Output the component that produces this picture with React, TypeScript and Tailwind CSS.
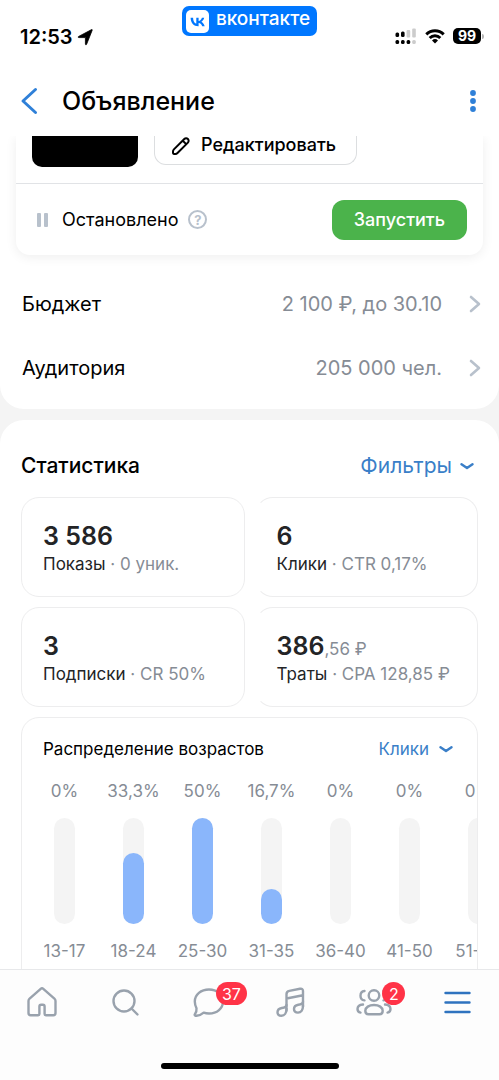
import type { ReactNode } from 'react'

interface Stat {
  value: string
  fraction?: string
  label: string
  note: string
}

interface AgeGroup {
  range: string
  share: string
  fill: number
}

const STATS: Stat[] = [
  { value: '3 586', label: 'Показы', note: '0 уник.' },
  { value: '6', label: 'Клики', note: 'CTR 0,17%' },
  { value: '3', label: 'Подписки', note: 'CR 50%' },
  { value: '386', fraction: ',56 ₽', label: 'Траты', note: 'CPA 128,85 ₽' },
]

const SETTINGS = [
  { name: 'Бюджет', value: '2 100 ₽, до 30.10' },
  { name: 'Аудитория', value: '205 000 чел.' },
]

// fill is relative to the largest group
const AGES: AgeGroup[] = [
  { range: '13-17', share: '0%', fill: 0 },
  { range: '18-24', share: '33,3%', fill: 67 },
  { range: '25-30', share: '50%', fill: 100 },
  { range: '31-35', share: '16,7%', fill: 33 },
  { range: '36-40', share: '0%', fill: 0 },
  { range: '41-50', share: '0%', fill: 0 },
  { range: '51-60', share: '0%', fill: 0 },
]

function ChevronDown() {
  return (
    <svg width="14" height="8" viewBox="0 0 14 8" fill="none" stroke="currentColor" strokeWidth="2.4" strokeLinecap="round" strokeLinejoin="round">
      <path d="M1.5 2.300 7 6.100l5.500-3.800" />
    </svg>
  )
}

function StatusBar() {
  return (
    <div className="grid grid-cols-3 items-start pt-1.5">
      <div className="flex items-center gap-1 pt-[17px] pl-5">
        <span className="text-[20px] leading-7 font-semibold">12:53</span>
        <svg width="17" height="17" viewBox="0 0 17 17">
          <path d="M15.200 1.200 9.600 15.300c-.3.8-1.200.7-1.200-.2V8.900c0-.2-.1-.3-.3-.3H1.900c-.9 0-1-.9-.2-1.200L14.600.6c.5-.2.8.1.6.6Z" fill="#000" stroke="#000" strokeWidth="0.8" strokeLinejoin="round" />
        </svg>
      </div>

      <div className="flex justify-center">
        <div className="flex h-[30px] items-center gap-[7px] rounded-[7px] bg-[#0077ff] pr-[7px] pl-1 text-white">
          <svg width="23" height="23" viewBox="0 0 23 23">
            <rect width="23" height="23" rx="5" fill="#fff" />
            <path d="M12.300 16.200C7.600 16.200 4.800 13 4.600 7.700h2.500c.1 3.900 1.800 5.500 3.200 5.900V7.700h2.300V11c1.400-.1 2.800-1.600 3.300-3.300h2.300c-.4 2-1.900 3.500-2.900 4.100 1 .5 2.700 1.800 3.400 4.400h-2.500c-.5-1.600-1.800-2.900-3.600-3.100v3.100Z" fill="#07f" />
          </svg>
          <span className="pb-1 text-[19px] leading-6 font-medium">вконтакте</span>
        </div>
      </div>

      <div className="flex items-center justify-end gap-2 pt-[22px] pr-[15px]">
        <svg width="22" height="16" viewBox="0 0 22 16">
          <rect x="0.500" y="4.500" width="3.600" height="4.500" rx="1.500" />
          <rect x="6" y="3.500" width="3.600" height="5.500" rx="1.500" />
          <rect x="11.600" y="2" width="3.600" height="7.500" rx="1" fill="#ccc" />
          <rect x="17.200" y="0.500" width="3.600" height="9" rx="1" fill="#ccc" />
          <rect x="0.500" y="12" width="3.600" height="4" rx="1.500" />
          <rect x="6" y="12" width="3.600" height="4" rx="1.500" />
          <rect x="11.600" y="12" width="3.600" height="4" rx="1.500" />
          <rect x="17.200" y="12" width="3.600" height="4" rx="1.500" fill="#ccc" />
        </svg>
        <svg width="20" height="15" viewBox="0 0 20 15" fill="none" stroke="#000" strokeWidth="3">
          <path d="M1.300 5.400a12.400 12.400 0 0 1 17.400 0" />
          <path d="M4.700 9a7.600 7.600 0 0 1 10.600 0" />
          <path d="m10 14.500-3-3a4.300 4.300 0 0 1 6 0Z" fill="#000" stroke="none" />
        </svg>
        <div className="flex items-center gap-px">
          <span className="flex h-4 w-7 items-center justify-center rounded-[5px] bg-black text-[14px] leading-4 font-bold text-white">99</span>
          <span className="h-[5px] w-[2px] rounded-r-full bg-[#b5b5b5]" />
        </div>
      </div>
    </div>
  )
}

function StatCard({ stat, right }: { stat: Stat; right: boolean }) {
  return (
    <div className={`h-[100px] rounded-[18px] border border-[#ededee] px-[21px] pt-6 ${right ? 'border-l-transparent' : ''}`}>
      <div className="h-7 text-[25px] leading-7 font-semibold text-[#232426]">
        {stat.value}
        {stat.fraction && <span className="text-[17px] font-normal text-[#868c95]">{stat.fraction}</span>}
      </div>
      <div className="mt-0.5 text-[17px] leading-6 whitespace-nowrap text-[#868c95]">
        <span className="text-[#232426]">{stat.label}</span> · {stat.note}
      </div>
    </div>
  )
}

function TabLink({ label, badge, active, children }: { label: string; badge?: string; active?: boolean; children: ReactNode }) {
  return (
    <a href="#" aria-label={label} className={`flex flex-1 justify-center ${active ? 'text-[#2f73bf]' : 'text-[#99a2ad]'}`}>
      <span className="relative">
        <svg width="36" height="36" viewBox="0 0 36 36" fill="none" stroke="currentColor" strokeWidth="2.400" strokeLinecap="round" strokeLinejoin="round">
          {children}
        </svg>
        {badge && (
          <span className="absolute -top-0.5 left-[26px] flex h-[23px] min-w-[23px] items-center justify-center rounded-full bg-[#ff3347] px-[6px] text-[16px] leading-5 text-white">
            {badge}
          </span>
        )}
      </span>
    </a>
  )
}

export default function App() {
  return (
    <div className="flex h-screen flex-col bg-[#f4f4f4] font-[Inter,'Liberation_Sans',sans-serif] text-black">
      {/* Header */}
      <header className="shrink-0 bg-white">
        <StatusBar />
        <div className="flex items-center pt-8 pr-[22px] pb-[17px] pl-5">
          <button type="button" aria-label="Назад" className="text-[#2f80d8]">
            <svg width="18" height="28" viewBox="0 0 18 28" fill="none" stroke="currentColor" strokeWidth="3" strokeLinecap="round" strokeLinejoin="round">
              <path d="M15.500 2.500 3 14l12.500 11.500" />
            </svg>
          </button>
          <h1 className="ml-6 flex-1 text-[25px] leading-9 font-medium">Объявление</h1>
          <button type="button" aria-label="Ещё" className="text-[#2f80d8]">
            <svg width="8" height="24" viewBox="0 0 8 24" fill="currentColor">
              <circle cx="4" cy="4" r="2.900" />
              <circle cx="4" cy="12" r="2.900" />
              <circle cx="4" cy="20" r="2.900" />
            </svg>
          </button>
        </div>
      </header>

      <main className="flex min-h-0 flex-1 flex-col gap-[11px] overflow-hidden">
        {/* Ad card and settings */}
        <section className="shrink-0 rounded-b-[24px] bg-white pb-[9px]">
          <div className="mx-4 rounded-b-[14px] shadow-[0_2px_12px_rgba(0,0,0,0.07)]">
            <div className="flex h-12 items-start gap-4 border-b border-[#e1e3e6] pl-4">
              <div className="h-[31px] w-[106px] rounded-b-[10px] bg-black" />
              <button type="button" className="flex h-[29px] items-start gap-2.5 rounded-b-[12px] border border-t-0 border-[#dcdee0] pr-5 pl-4 text-[18px] leading-[18px] font-medium">
                <svg width="20" height="20" viewBox="0 0 20 20" fill="none" stroke="currentColor" strokeWidth="2" strokeLinecap="round" strokeLinejoin="round">
                  <path d="M2 15.600c0-1 .2-1.500.9-2.200L13.300 3a2.500 2.500 0 0 1 3.600 3.600L6.500 17c-.7.7-1.200.9-2.200.9H2.800c-.6 0-.8-.2-.8-.8ZM11.800 4.700l3.400 3.400" />
                </svg>
                Редактировать
              </button>
            </div>
            <div className="flex h-[71px] items-center pr-4 pl-[21px]">
              <span className="mr-3.5 flex gap-[3px]">
                <span className="h-[14px] w-1 rounded-[1px] bg-[#b8c1cc]" />
                <span className="h-[14px] w-1 rounded-[1px] bg-[#b8c1cc]" />
              </span>
              <span className="text-[18px] leading-6">Остановлено</span>
              <button type="button" aria-label="Справка" className="ml-2.5 flex h-[19px] w-[19px] items-center justify-center rounded-full border-2 border-[#b8c1cc] text-[13px] leading-4 font-bold text-[#b8c1cc]">?</button>
              <button type="button" className="ml-auto flex h-10 items-center rounded-[12px] bg-[#4bb34b] px-[22px] text-[18px] leading-6 font-medium text-white">Запустить</button>
            </div>
          </div>

          <div className="mt-[17px]">
            {SETTINGS.map((s) => (
              <a key={s.name} href="#" className="flex h-16 items-center pr-[18px] pl-[22px] text-[20px]">
                <span className="flex-1">{s.name}</span>
                <span className="text-[#868c95]">{s.value}</span>
                <svg className="ml-[27px]" width="12" height="18" viewBox="0 0 12 18" fill="none" stroke="#b8c1cc" strokeWidth="2.600" strokeLinecap="round" strokeLinejoin="round">
                  <path d="m2 2 8 7-8 7" />
                </svg>
              </a>
            ))}
          </div>
        </section>

        {/* Statistics */}
        <section className="flex-1 rounded-t-[24px] bg-white px-[21px] pt-[30px]">
          <div className="flex items-center justify-between pr-1">
            <h2 className="text-[21px] leading-8 font-medium">Статистика</h2>
            <button type="button" className="flex items-center gap-2 text-[21px] leading-8 text-[#3a7fc8]">
              Фильтры
              <ChevronDown />
            </button>
          </div>

          <div className="mt-[15px] grid grid-cols-2 gap-2.5">
            {STATS.map((stat, i) => (
              <StatCard key={stat.label} stat={stat} right={i % 2 === 1} />
            ))}
          </div>

          {/* Age chart */}
          <div className="mt-2.5 overflow-hidden rounded-[18px] border border-[#ededee] pb-6">
            <div className="flex items-center justify-between pt-[19px] pr-6 pl-[21px]">
              <h3 className="text-[17px] leading-6">Распределение возрастов</h3>
              <button type="button" className="flex items-center gap-2.5 text-[17px] leading-6 text-[#3a7fc8]">
                Клики
                <ChevronDown />
              </button>
            </div>
            <div className="mt-[18px] flex pl-2">
              {AGES.map((age) => (
                <div key={age.range} className="flex w-[69px] shrink-0 flex-col items-center text-[17px] leading-6 text-[#868c95]">
                  <span>{age.share}</span>
                  <div className="my-[15px] flex h-[106px] w-[21px] items-end rounded-full bg-[#f4f4f4]">
                    <div className="w-full rounded-full bg-[#8ab6fb]" style={{ height: `${age.fill}%` }} />
                  </div>
                  <span className="whitespace-nowrap">{age.range}</span>
                </div>
              ))}
            </div>
          </div>
        </section>
      </main>

      {/* Tab bar */}
      <footer className="shrink-0 border-t border-[#e7e8ea] bg-[#fdfdfd] pt-3.5 pb-[11px]">
        <nav className="flex">
          <TabLink label="Главная">
            <path d="M16.700 4.900 5.600 14.700c-.7.600-1.100 1.200-1.100 2.200v12.200c0 1.500.700 2.200 2.200 2.200h7.500c.8 0 1.200-.4 1.200-1.200v-7.700c0-1.200.5-1.700 1.700-1.700h1.800c1.200 0 1.700.5 1.700 1.700v7.700c0 .8.4 1.200 1.200 1.200h7.500c1.500 0 2.200-.7 2.200-2.200V16.900c0-1-.4-1.600-1.100-2.200L19.300 4.900c-.9-.8-1.700-.8-2.600 0Z" />
          </TabLink>
          <TabLink label="Поиск">
            <circle cx="17" cy="17" r="10.500" />
            <path d="m24.500 24.500 6 6" />
          </TabLink>
          <TabLink label="Сообщения" badge="37">
            <path d="M19 5.500c8 0 14 5.200 14 12s-6 12-14 12c-2 0-3.700-.3-5.300-.9-2.400 2-5.300 3.600-8.200 3.100-1-.2-1.100-.9-.5-1.700 1.300-1.700 1.700-3.700 1.500-5.800-1-2-1.700-4.200-1.700-6.700 0-6.800 6.200-12 14.200-12Z" />
          </TabLink>
          <TabLink label="Музыка">
            <path d="M13.500 26.500V10.300c0-1.900.9-3 2.800-3.400L27 4.800c2-.4 3 .4 3 2.300v15.400M13.500 14.500 30 11.200" />
            <path d="M13.500 25c0 4-2 6.800-5 6.800-2.400 0-4-1.500-4-3.600 0-2.300 1.500-3.700 4.300-4.200 3-.5 4.700-.8 4.700-3" />
            <path d="M30 21.800c0 4-2 6.800-5 6.800-2.400 0-4-1.500-4-3.600 0-2.300 1.500-3.700 4.300-4.200 3-.5 4.700-.8 4.700-3" />
          </TabLink>
          <TabLink label="Друзья" badge="2">
            <circle cx="18" cy="11.500" r="5.300" />
            <path d="M18 21c-5 0-8.700 2.400-8.700 5.800 0 2.300 1 3.500 3.200 3.500h11c2.200 0 3.200-1.200 3.200-3.500 0-3.400-3.700-5.800-8.700-5.800Z" />
            <path d="M8.500 7c-2.500.3-4 2.200-4 4.700s1.500 4.400 4 4.700M7 20.500c-3.300.3-5.500 2-5.500 4.500 0 2 .9 3.200 3 3.600M27.500 7c2.500.3 4 2.200 4 4.700s-1.500 4.400-4 4.700M29 20.500c3.300.3 5.500 2 5.500 4.500 0 2-.9 3.200-3 3.600" />
          </TabLink>
          <TabLink label="Меню" active>
            <path d="M6.500 9h24M6.500 18.500h24M6.500 28h24" />
          </TabLink>
        </nav>
        <div className="mx-auto mt-[43px] h-[6px] w-[178px] rounded-full bg-black" />
      </footer>
    </div>
  )
}
